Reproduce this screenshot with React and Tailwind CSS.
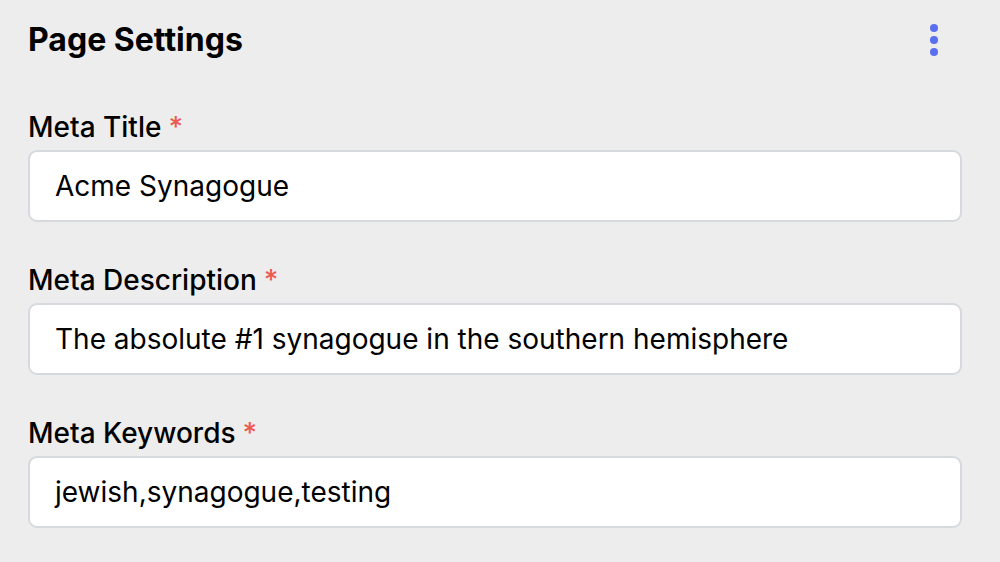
import React from "react";

function Field({ label, value }) {
  return (
    <div className="flex flex-col">
      <label className="flex items-center h-[34px] text-[28px] font-medium text-black leading-none">
        {label}
        <span className="ml-[7px] text-[#ef5a50]">*</span>
      </label>
      <div className="mt-[6px] h-[72px] rounded-[9px] border-2 border-[#d6d9de] bg-white flex items-center px-[25px]">
        <span className="text-[28px] text-black leading-none">{value}</span>
      </div>
    </div>
  );
}

export default function App() {
  return (
    <div
      className="w-[1000px] h-[562px] bg-[#ededed] overflow-hidden pl-[28px] pr-[38px]"
      style={{ fontFamily: "Inter, 'Noto Sans', sans-serif" }}
    >
      <div className="flex items-center justify-between h-[80px]">
        <h1 className="text-[32px] font-bold text-black leading-none">Page Settings</h1>
        <button className="flex flex-col items-center gap-[4px] w-[12px] mr-[22px]">
          <span className="w-[8px] h-[8px] rounded-full bg-[#5a6ff0]" />
          <span className="w-[8px] h-[8px] rounded-full bg-[#5a6ff0]" />
          <span className="w-[8px] h-[8px] rounded-full bg-[#5a6ff0]" />
        </button>
      </div>
      <div className="flex flex-col gap-[41px] mt-[30px]">
        <Field label="Meta Title" value="Acme Synagogue" />
        <Field label="Meta Description" value="The absolute #1 synagogue in the southern hemisphere" />
        <Field label="Meta Keywords" value="jewish,synagogue,testing" />
      </div>
    </div>
  );
}
